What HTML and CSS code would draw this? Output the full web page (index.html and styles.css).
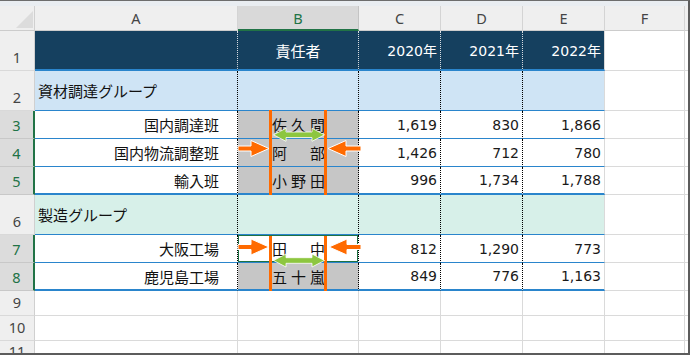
FILE: index.html
```html
<!DOCTYPE html>
<html lang="ja">
<head>
<meta charset="utf-8">
<title>Sheet</title>
<link rel="stylesheet" href="styles.css">
</head>
<body>
<div class="window">
  <div class="strip"></div>
  <div class="sheet">
    <div class="corner"><svg width="17" height="17" viewBox="0 0 17 17"><polygon points="0,17 17,17 17,0" fill="#dcdcdc"/></svg></div>
    <div class="ch">A</div><div class="ch sel">B</div><div class="ch">C</div><div class="ch">D</div><div class="ch">E</div><div class="ch">F</div><div class="ch edge"></div>

    <div class="rh">1</div>
    <div class="c hd dot"></div>
    <div class="c hd dot ctr">責任者</div>
    <div class="c hd dot num">2020年</div>
    <div class="c hd dot num">2021年</div>
    <div class="c hd num">2022年</div>
    <div class="c"></div><div class="c edge"></div>

    <div class="rh">2</div>
    <div class="c g1 dot grp">資材調達グループ</div>
    <div class="c g1 dot"></div>
    <div class="c g1 dot"></div>
    <div class="c g1 dot"></div>
    <div class="c g1"></div>
    <div class="c"></div><div class="c edge"></div>

    <div class="rh sel">3</div>
    <div class="c rw dot lbl">国内調達班</div>
    <div class="c rw dot name selb"><span>佐</span><span>久</span><span>間</span></div>
    <div class="c rw dot num">1,619</div>
    <div class="c rw dot num">830</div>
    <div class="c rw num">1,866</div>
    <div class="c"></div><div class="c edge"></div>

    <div class="rh sel">4</div>
    <div class="c rw dot lbl">国内物流調整班</div>
    <div class="c rw dot name selb"><span>阿</span><span>部</span></div>
    <div class="c rw dot num">1,426</div>
    <div class="c rw dot num">712</div>
    <div class="c rw num">780</div>
    <div class="c"></div><div class="c edge"></div>

    <div class="rh sel">5</div>
    <div class="c rw thick dot lbl">輸入班</div>
    <div class="c rw thick dot name selb"><span>小</span><span>野</span><span>田</span></div>
    <div class="c rw thick dot num">996</div>
    <div class="c rw thick dot num">1,734</div>
    <div class="c rw thick num">1,788</div>
    <div class="c"></div><div class="c edge"></div>

    <div class="rh">6</div>
    <div class="c g2 dot grp">製造グループ</div>
    <div class="c g2 dot"></div>
    <div class="c g2 dot"></div>
    <div class="c g2 dot"></div>
    <div class="c g2"></div>
    <div class="c"></div><div class="c edge"></div>

    <div class="rh sel">7</div>
    <div class="c rw dot lbl">大阪工場</div>
    <div class="c rw dot name active"><span>田</span><span>中</span></div>
    <div class="c rw dot num">812</div>
    <div class="c rw dot num">1,290</div>
    <div class="c rw num">773</div>
    <div class="c"></div><div class="c edge"></div>

    <div class="rh sel">8</div>
    <div class="c rw thick dot lbl">鹿児島工場</div>
    <div class="c rw thick dot name selb"><span>五</span><span>十</span><span>嵐</span></div>
    <div class="c rw thick dot num">849</div>
    <div class="c rw thick dot num">776</div>
    <div class="c rw thick num">1,163</div>
    <div class="c"></div><div class="c edge"></div>

    <div class="rh">9</div>
    <div class="c"></div><div class="c"></div><div class="c"></div><div class="c"></div><div class="c"></div><div class="c"></div><div class="c edge"></div>

    <div class="rh">10</div>
    <div class="c"></div><div class="c"></div><div class="c"></div><div class="c"></div><div class="c"></div><div class="c"></div><div class="c edge"></div>

    <div class="rh cut">11</div>
    <div class="c open"></div><div class="c open"></div><div class="c open"></div><div class="c open"></div><div class="c open"></div><div class="c open"></div><div class="c open edge"></div>
  </div>

  <svg class="overlay" width="690" height="355" viewBox="0 0 690 355">
    <g fill="#ff6a00" stroke="#ffffff" stroke-width="1" stroke-linejoin="miter">
      <polygon points="238,146 251,146 251,140.5 269,148.5 251,156.5 251,151 238,151"/>
      <polygon points="328,148.5 346,140.5 346,146 361,146 361,151 346,151 346,156.5"/>
      <polygon points="238,244.5 251,244.5 251,239 269,247 251,255 251,249.5 238,249.5"/>
      <polygon points="329,247 347,239 347,244.5 361,244.5 361,249.5 347,249.5 347,255"/>
    </g>
    <g fill="#ff6a00">
      <rect x="269" y="110" width="3" height="85"/>
      <rect x="324" y="110" width="3" height="85"/>
      <rect x="269" y="236" width="3" height="55"/>
      <rect x="324" y="236" width="3" height="55"/>
    </g>
    <g fill="#8dc63f" stroke="#ffffff" stroke-width="0.8">
      <polygon points="273.5,134.8 286,128.3 286,132 312,132 312,128.3 324.5,134.8 312,141.3 312,137.6 286,137.6 286,141.3"/>
      <polygon points="273.5,260.5 286,254 286,257.7 312,257.7 312,254 324.5,260.5 312,267 312,263.3 286,263.3 286,267"/>
    </g>
  </svg>
</div>
</body>
</html>
```

FILE: styles.css
```css
* { box-sizing: border-box; }
html, body { margin: 0; padding: 0; background: #ffffff; overflow: hidden; }

.window {
  position: relative;
  width: 690px;
  height: 355px;
  border-top: 1px solid #6d6d6d;
  border-right: 2px solid #5c5c5c;
  border-bottom: 2px solid #5c5c5c;
  display: flex;
  flex-direction: column;
  overflow: hidden;
}

.strip { height: 5px; background: #e9edf1; flex: none; }

.sheet {
  flex: 1;
  display: grid;
  grid-template-columns: 35px 203px 121px 82px 82px 82px 80px 1fr;
  grid-template-rows: 25px 40px 40px 28px 28px 28px 40px 28px 28px 25px 25px 1fr;
  min-height: 0;
}

.corner {
  background: #efefef;
  border-right: 1px solid #d0d0d0;
  border-bottom: 1px solid #cccccc;
  display: flex;
  justify-content: flex-end;
  align-items: flex-end;
  padding: 0 1px 2px 0;
}
.corner svg { display: block; }

.ch {
  background: #efefef;
  border-right: 1px solid #d4d4d4;
  border-bottom: 1px solid #cccccc;
  display: flex;
  align-items: center;
  justify-content: center;
  font-family: "Noto Sans", "Open Sans", sans-serif;
  font-size: 14.5px;
  color: #444444;
}
.ch.sel {
  background: #d9d9d9;
  color: #217346;
  border-bottom: 2px solid #217346;
  border-right-color: #c4c4c4;
}
.ch.edge { border-right: none; }

.rh {
  background: #efefef;
  border-right: 1px solid #d0d0d0;
  border-bottom: 1px solid #d9d9d9;
  display: flex;
  justify-content: center;
  align-items: flex-end;
  font-family: "Noto Sans", "Open Sans", sans-serif;
  font-size: 14.5px;
  line-height: 26px;
  color: #444444;
  overflow: hidden;
}
.rh.sel {
  background: #dcdcdc;
  color: #217346;
  border-right: 2px solid #217346;
  border-bottom-color: #c8c8c8;
}
.rh.cut {
  align-items: flex-start;
  line-height: 20px;
  border-bottom: none;
}

.c {
  border-right: 1px solid #dadada;
  border-bottom: 1px solid #dadada;
  display: flex;
  align-items: center;
  font-family: "Noto Sans CJK JP", "Noto Sans", sans-serif;
  font-size: 15px;
  color: #111111;
  white-space: nowrap;
  overflow: hidden;
}
.c.edge { border-right: none; }
.c.open { border-bottom: none; }

.grp { padding-left: 3px; }
.lbl { justify-content: flex-end; padding-right: 18px; }
.ctr { justify-content: center; }
.num {
  justify-content: flex-end;
  padding-right: 3px;
  font-family: "DejaVu Sans", "Noto Sans CJK JP", sans-serif;
  font-size: 14px;
  color: #1a1a1a;
}
.name {
  justify-content: space-between;
  padding: 0 33px 0 34px;
}

.c.hd {
  background: #15405f;
  color: #ffffff;
  border-bottom: 2px solid #2a85cc;
}
.g1 { background: #cfe4f5; border-bottom-color: #2a85cc; }
.g2 { background: #d7f0e9; border-bottom-color: #2a85cc; }
.rw { border-bottom-color: #2a85cc; }
.thick { border-bottom-width: 2px; }

.dot { border-right: 1px dotted #000000; }
.c.hd.dot { border-right: 1px dotted #d8dde2; }

.selb { background: #c6c6c6; }
.active { box-shadow: inset 0 0 0 1px #1f7244; }

.overlay {
  position: absolute;
  top: -1px;
  left: 0;
  pointer-events: none;
}
```
